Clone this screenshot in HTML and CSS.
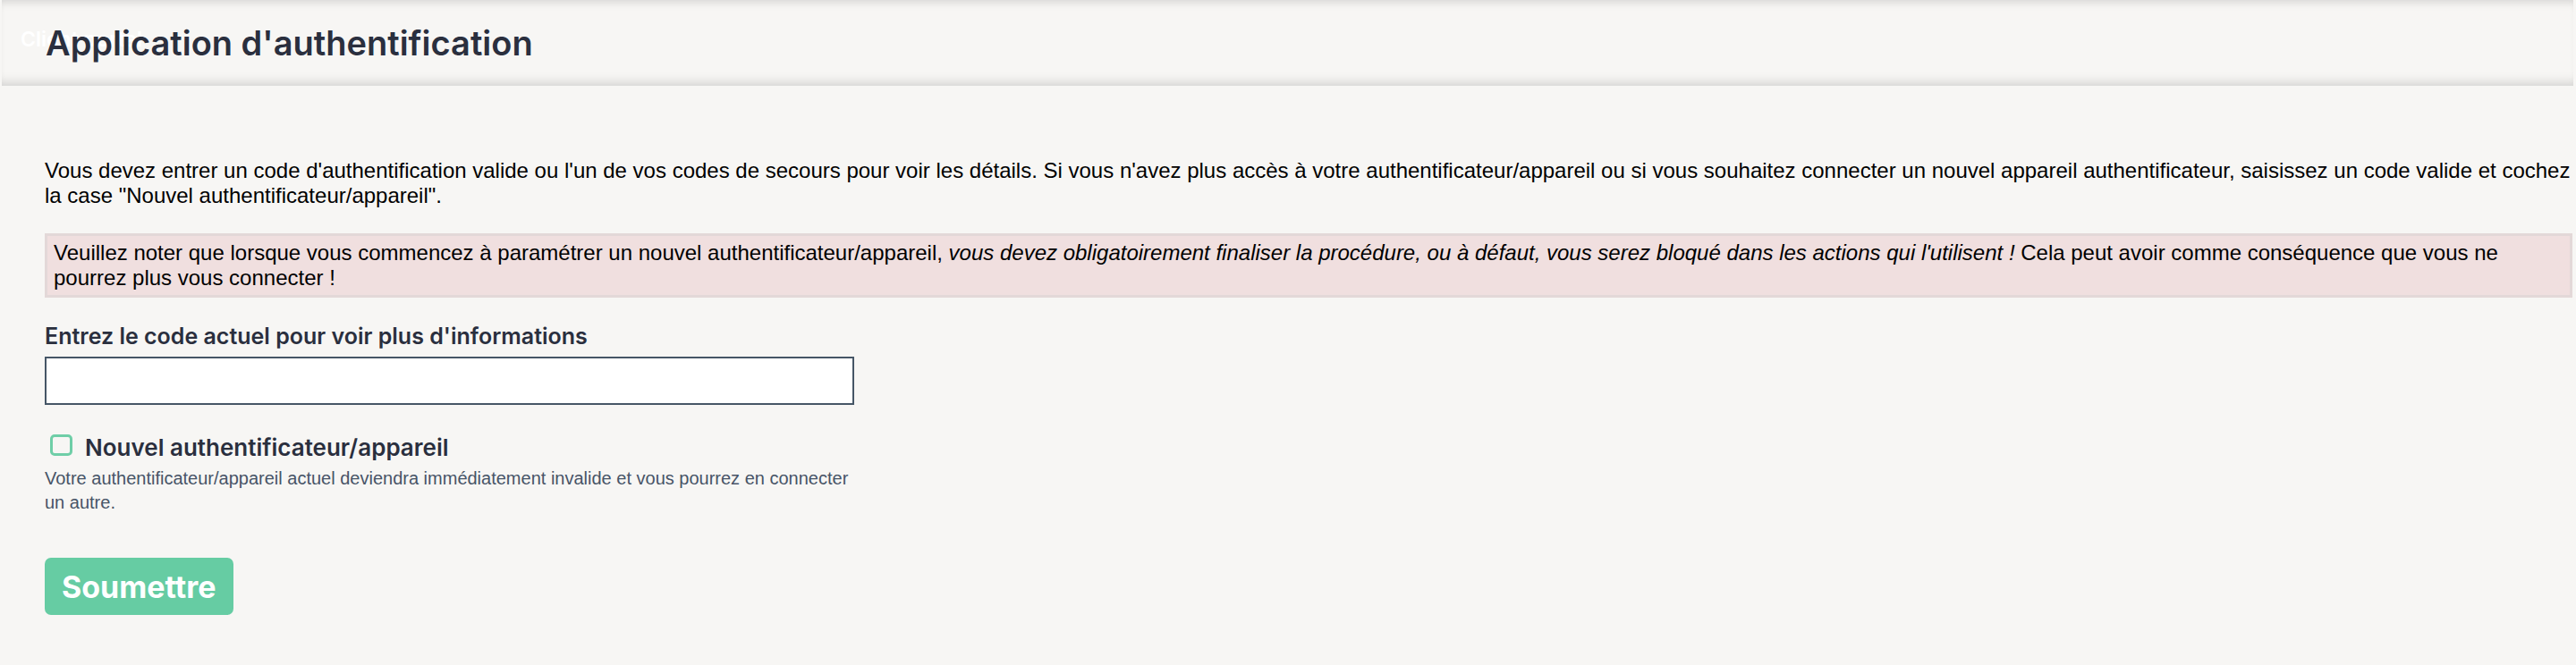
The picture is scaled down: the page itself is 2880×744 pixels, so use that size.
FILE: index.html
```html
<!DOCTYPE html>
<html lang="fr">
<head>
  <meta charset="UTF-8">
  <meta name="viewport" content="width=device-width, initial-scale=1.0">
  <title>Application d'authentification</title>
  <link rel="stylesheet" href="styles.css">
</head>
<body>
  <header class="topbar">
    <span class="brand">Client portal</span>
    <h1 class="page-title">Application d'authentification</h1>
  </header>

  <main class="content">
    <p class="intro">Vous devez entrer un code d'authentification valide ou l'un de vos codes de secours pour voir les détails. Si vous n'avez plus accès à votre authentificateur/appareil ou si vous souhaitez connecter un nouvel appareil authentificateur, saisissez un code valide et cochez la case "Nouvel authentificateur/appareil".</p>

    <div class="alert">
      Veuillez noter que lorsque vous commencez à paramétrer un nouvel authentificateur/appareil, <em>vous devez obligatoirement finaliser la procédure, ou à défaut, vous serez bloqué dans les actions qui l'utilisent !</em> Cela peut avoir comme conséquence que vous ne pourrez plus vous connecter !
    </div>

    <form class="code-form">
      <label class="field-label" for="currentCode">Entrez le code actuel pour voir plus d'informations</label>
      <input type="text" id="currentCode" class="field-input">

      <label class="check-row" for="newDevice">
        <input type="checkbox" id="newDevice" class="check-box">
        <span class="check-label">Nouvel authentificateur/appareil</span>
      </label>
      <p class="help">Votre authentificateur/appareil actuel deviendra immédiatement invalide et vous pourrez en connecter un autre.</p>

      <button type="button" class="submit-btn">Soumettre</button>
    </form>
  </main>
</body>
</html>
```

FILE: styles.css
```css
* {
  box-sizing: border-box;
}
body {
  margin: 0;
  background-color: #f7f6f4;
  font-family: 'Liberation Sans', Arial, sans-serif;
  color: #000;
}
.topbar {
  position: relative;
  height: 96px;
  display: flex;
  align-items: center;
  padding-left: 49px;
  margin: 0 3px 0 2px;
  background-color: #f7f6f4;
  box-shadow: inset 0 9px 10px -6px rgba(0,0,0,0.13), inset 0 -12px 12px -8px rgba(0,0,0,0.14);
}
.brand {
  position: absolute;
  left: 21px;
  top: 30px;
  font-family: 'Inter', sans-serif;
  font-weight: 600;
  font-size: 23px;
  color: #ffffff;
}
.page-title {
  position: relative;
  margin: 0;
  font-family: 'Inter', sans-serif;
  font-weight: 600;
  font-size: 38px;
  color: #2a2f3e;
}
.content {
  padding: 81px 4px 50px 50px;
}
.intro {
  margin: 0 0 28px 0;
  font-size: 24px;
  line-height: 28px;
}
.alert {
  background-color: #f0dfdf;
  border: 3px solid #e3d8d8;
  padding: 5px 7px;
  font-size: 24px;
  line-height: 28px;
}
.code-form {
  width: 905px;
  margin-top: 25px;
}
.field-label {
  display: block;
  font-family: 'Inter', sans-serif;
  font-weight: 600;
  font-size: 25px;
  line-height: 36px;
  color: #2a2f3e;
  margin-bottom: 5px;
}
.field-input {
  display: block;
  width: 100%;
  height: 54px;
  border: 2px solid #465666;
  background-color: #fff;
}
.check-row {
  display: flex;
  align-items: center;
  gap: 14px;
  margin-top: 27px;
  padding-left: 6px;
}
.check-box {
  appearance: none;
  margin: 0;
  width: 25px;
  height: 24px;
  border: 3px solid #6fcea7;
  border-radius: 5px;
  background: transparent;
}
.check-label {
  font-family: 'Inter', sans-serif;
  font-weight: 600;
  font-size: 26px;
  line-height: 30px;
  color: #2a2f3e;
  margin-top: 6px;
}
.help {
  margin: 6px 0 0 0;
  font-size: 20px;
  line-height: 27px;
  color: #475467;
}
.submit-btn {
  margin-top: 48px;
  height: 64px;
  padding: 0 19px;
  border: none;
  border-radius: 7px;
  background-color: #66cca3;
  color: #fff;
  font-family: 'Inter', sans-serif;
  font-weight: 700;
  font-size: 34px;
  cursor: pointer;
}
```
